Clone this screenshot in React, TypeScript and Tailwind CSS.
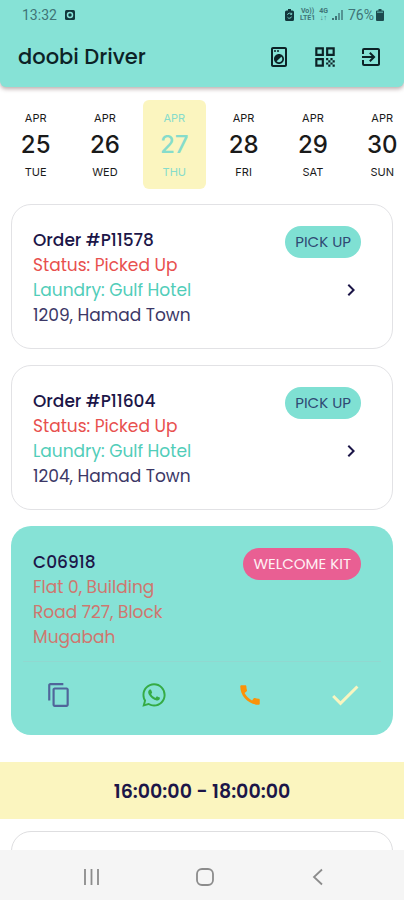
import { clsx } from 'clsx'
import {
  MdCall,
  MdCheck,
  MdChevronRight,
  MdContentCopy,
  MdExitToApp,
  MdOutlineLocalLaundryService,
  MdOutlineWhatsapp,
  MdQrCode,
} from 'react-icons/md'

type Day = { month: string; date: number; weekday: string }

type Order = { id: string; status: string; laundry: string; address: string }

const DAYS: Day[] = [
  { month: 'APR', date: 25, weekday: 'TUE' },
  { month: 'APR', date: 26, weekday: 'WED' },
  { month: 'APR', date: 27, weekday: 'THU' },
  { month: 'APR', date: 28, weekday: 'FRI' },
  { month: 'APR', date: 29, weekday: 'SAT' },
  { month: 'APR', date: 30, weekday: 'SUN' },
]

const SELECTED_DATE = 27

const ORDERS: Order[] = [
  { id: 'P11578', status: 'Picked Up', laundry: 'Gulf Hotel', address: '1209, Hamad Town' },
  { id: 'P11604', status: 'Picked Up', laundry: 'Gulf Hotel', address: '1204, Hamad Town' },
]

export default function App() {
  return (
    <div className="flex h-screen flex-col overflow-hidden bg-white font-[Poppins,Inter,sans-serif] text-[#1c1648]">
      <header className="relative z-10 shrink-0 rounded-b-md bg-[#86e2d6] shadow-[0_2px_4px_rgba(60,20,20,0.35)]">
        <StatusBar />
        <div className="flex h-[57px] items-center pr-[21px] pb-1 pl-[18px] text-[#0c2226]">
          <h1 className="flex-1 text-[21px] font-medium">doobi Driver</h1>
          <div className="flex gap-[21px]">
            <button aria-label="Laundry">
              <MdOutlineLocalLaundryService size={24} />
            </button>
            <button aria-label="QR code">
              <MdQrCode size={26} />
            </button>
            <button aria-label="Sign out">
              <MdExitToApp size={24} />
            </button>
          </div>
        </div>
      </header>

      <main className="min-h-0 flex-1 overflow-hidden">
        <div className="flex overflow-hidden pt-[13px] pl-px">
          {DAYS.map((d) => (
            <div key={d.date} className="w-[17.2%] shrink-0 px-[3px]">
              <DayButton day={d} selected={d.date === SELECTED_DATE} />
            </div>
          ))}
        </div>

        <div className="flex flex-col gap-4 px-[11px] pt-[15px]">
          {ORDERS.map((o) => (
            <OrderCard key={o.id} order={o} />
          ))}
          <CustomerCard />
        </div>

        <h2 className="mt-[27px] bg-[#fbf5bf] pt-0.5 text-center text-[19px] leading-[55px] font-semibold">
          16:00:00 - 18:00:00
        </h2>

        <div className="px-[11px] pt-3">
          <div className="h-36 rounded-[20px] border border-[#dedee0]" />
        </div>
      </main>

      <SystemNav />
    </div>
  )
}

function StatusBar() {
  return (
    <div className="flex h-[30px] items-center pr-5 pl-[22px] font-[Roboto,sans-serif] text-sm text-[#3f7476]">
      <span>13:32</span>
      <svg width="10" height="12" viewBox="0 0 10 12" className="ml-2">
        <rect y="1" width="10" height="10" rx="1.5" fill="#12363b" />
        <circle cx="5" cy="6" r="2.5" fill="none" stroke="#86e2d6" strokeWidth="1.5" />
      </svg>
      <span className="flex-1" />
      <svg width="9" height="12" viewBox="0 0 9 12" className="mr-1.5">
        <path d="M3 0h3v1.5h1.5Q9 1.5 9 3v7.5Q9 12 7.5 12h-6Q0 12 0 10.5V3Q0 1.5 1.5 1.5H3z" fill="#12363b" />
        <path
          d="M2.5 5.8a2.2 2.2 0 0 1 4-.6M6.5 7.6a2.2 2.2 0 0 1-4 .6M6.7 3.8v1.6H5.2"
          fill="none"
          stroke="#86e2d6"
          strokeWidth="0.9"
        />
      </svg>
      <span className="mr-1 text-center text-[7px] leading-[7px] font-bold">
        Vo))
        <br />
        LTE1
      </span>
      <span className="mr-1 text-center text-[7px] leading-[7px] font-bold">
        4G
        <br />
        ↓↑
      </span>
      <svg width="12" height="12" viewBox="0 0 12 12" className="mr-1" fill="#3f7476">
        <rect x="0" y="9" width="2" height="2" />
        <rect x="3" y="7" width="2" height="4" />
        <rect x="6" y="4" width="2" height="7" opacity="0.7" />
        <rect x="9" y="1" width="2" height="10" opacity="0.7" />
      </svg>
      <span>76%</span>
      <svg width="8" height="12" viewBox="0 0 8 12" className="ml-0.5">
        <path d="M2.5 0h3v1.5H7q1 0 1 1V11q0 1-1 1H1q-1 0-1-1V2.5q0-1 1-1h1.5z" fill="#1d4a4e" />
        <path d="M1 2.5h6V4H1z" fill="#4f9a97" />
      </svg>
    </div>
  )
}

function DayButton({ day, selected }: { day: Day; selected: boolean }) {
  return (
    <button
      className={clsx(
        'flex w-full flex-col items-center rounded-md pt-2 pb-[7px] font-[Inter,sans-serif] text-[11px] leading-5',
        selected ? 'bg-[#fbf5bf] text-[#86dccb]' : 'text-[#1a1a1a]',
      )}
    >
      <span>{day.month}</span>
      <span className="text-2xl leading-[34px] font-medium">{day.date}</span>
      <span>{day.weekday}</span>
    </button>
  )
}

function OrderCard({ order }: { order: Order }) {
  return (
    <article className="flex rounded-[20px] border border-[#e2e2e5] pt-[21px] pr-[31px] pb-5 pl-[21px] text-[17px] leading-[25px]">
      <div className="flex-1 pt-0.5">
        <h3 className="font-medium">Order #{order.id}</h3>
        <p className="text-[#e8504e]">Status: {order.status}</p>
        <p className="text-[#51cdb9]">Laundry: {order.laundry}</p>
        <p className="text-[#3c3766]">{order.address}</p>
      </div>
      <div className="flex flex-col items-end gap-5">
        <button className="rounded-full bg-[#7fe0d3] px-2.5 text-[15px] leading-8 text-[#2f4a74]">PICK UP</button>
        <button aria-label="Open order" className="-mr-0.5">
          <MdChevronRight size={24} />
        </button>
      </div>
    </article>
  )
}

function CustomerCard() {
  return (
    <article className="rounded-[20px] bg-[#86e2d6] text-[17px] leading-[25px]">
      <div className="flex items-start pt-[22px] pr-8 pb-[11px] pl-[22px]">
        <div className="flex-1 pt-0.5">
          <h3 className="font-medium">C06918</h3>
          <p className="text-[#cf776f]">
            Flat 0, Building
            <br />
            Road 727, Block
            <br />
            Mugabah
          </p>
        </div>
        <button className="rounded-full bg-[#e95f93] px-2.5 text-[15px] leading-8 text-[#fff0f3]">WELCOME KIT</button>
      </div>
      <div className="mx-3 border-t border-[#90d8d0]" />
      <div className="grid h-[73px] grid-cols-4 place-items-center pb-2">
        <button aria-label="Copy address">
          <MdContentCopy size={26} color="#50659a" />
        </button>
        <button aria-label="WhatsApp">
          <MdOutlineWhatsapp size={28} color="#35ab45" />
        </button>
        <button aria-label="Call">
          <MdCall size={26} color="#fb9208" />
        </button>
        <button aria-label="Done">
          <MdCheck size={36} color="#f8f5c0" />
        </button>
      </div>
    </article>
  )
}

function SystemNav() {
  return (
    <nav className="flex h-[50px] shrink-0 items-center justify-center gap-[89px] bg-[#f5f5f5] pt-1 pl-[5px]">
      <button aria-label="Recent apps">
        <svg width="24" height="24" viewBox="0 0 24 24" fill="none" stroke="#8c8c8c" strokeWidth="1.8">
          <path d="M5 4v16M11.5 4v16M18 4v16" />
        </svg>
      </button>
      <button aria-label="Home">
        <svg width="24" height="24" viewBox="0 0 24 24" fill="none" stroke="#8c8c8c" strokeWidth="1.8">
          <rect x="4" y="4" width="16" height="16" rx="5" />
        </svg>
      </button>
      <button aria-label="Back">
        <svg width="24" height="24" viewBox="0 0 24 24" fill="none" stroke="#8c8c8c" strokeWidth="1.8">
          <path d="M16 4.5 8 12l8 7.5" />
        </svg>
      </button>
    </nav>
  )
}
